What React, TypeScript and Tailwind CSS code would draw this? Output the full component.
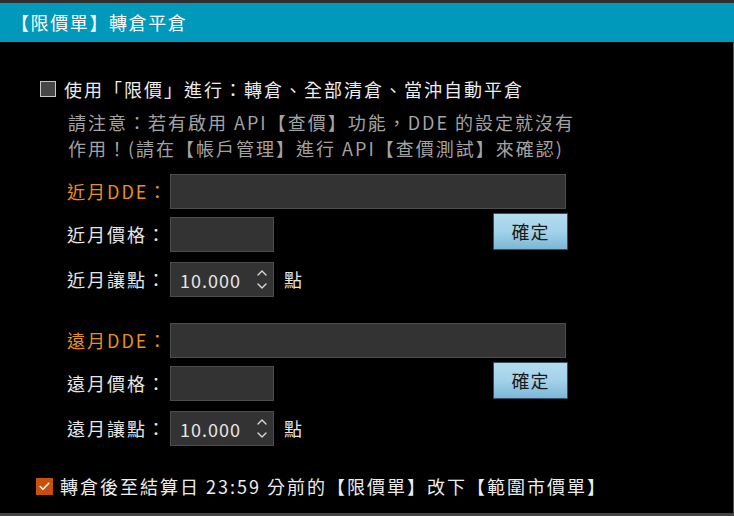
import { ChevronUp, ChevronDown, Check } from "lucide-react";

const font = { fontFamily: '"Noto Sans CJK TC", "Noto Sans", sans-serif' };

function TextBox({ w }: { w: string }) {
  return <div className={`${w} h-[35px] bg-[#333333] border border-[#4d4d4d]`} />;
}

function Spinner() {
  return (
    <div className="flex items-center">
      <div className="flex items-center justify-between w-[104px] h-[35px] bg-[#333333] border border-[#4d4d4d] pl-[9px] pr-[3px]">
        <span className="text-[18px] text-[#e6e6e6] leading-none tracking-[1px]">10.000</span>
        <div className="flex flex-col items-center text-[#d8d8d8]">
          <ChevronUp className="w-[16px] h-[16px] -mb-[3px]" strokeWidth={2} />
          <ChevronDown className="w-[16px] h-[16px]" strokeWidth={2} />
        </div>
      </div>
      <span className="ml-[10px] text-[18px] text-[#e6e6e6]">點</span>
    </div>
  );
}

function Group({ prefix }: { prefix: string }) {
  return (
    <div className="flex flex-col pl-[67px] tracking-[2px]">
      <div className="flex items-center">
        <span className="w-[103px] text-[18px] text-[#e8901a] whitespace-nowrap">{prefix}DDE：</span>
        <TextBox w="w-[396px]" />
      </div>
      <div className="flex items-center mt-[8px]">
        <span className="w-[103px] text-[18px] text-[#e6e6e6] whitespace-nowrap">{prefix}價格：</span>
        <TextBox w="w-[104px]" />
        <button className="ml-[219px] -mt-[6px] w-[75px] h-[37px] border border-[#2f4f66] bg-gradient-to-b from-[#b4dcef] via-[#a2d2ea] to-[#7bb7d6] text-[18px] text-[#1a1a1a] tracking-[1px]">
          確定
        </button>
      </div>
      <div className="flex items-center mt-[10px]">
        <span className="w-[103px] text-[18px] text-[#e6e6e6] whitespace-nowrap">{prefix}讓點：</span>
        <Spinner />
      </div>
    </div>
  );
}

export default function App() {
  return (
    <div className="w-[734px] h-[516px] bg-black flex flex-col overflow-hidden" style={font}>
      <div className="h-[3px] bg-[#2e2e2e]" />
      <div className="h-[39px] bg-[#0199bb] flex items-center pl-[11px]">
        <span className="text-[18px] text-white tracking-[1.6px]">【限價單】轉倉平倉</span>
      </div>
      <div className="flex-1 flex flex-col border-r border-[#555] border-b-[3px] border-b-[#444] tracking-[2px]">
        {/* limit price option */}
        <div className="flex items-center mt-[34px] pl-[40px] h-[26px]">
          <div className="w-[16px] h-[16px] bg-[#474747] border-[1.5px] border-[#c8c8c8]" />
          <span className="ml-[8px] text-[18px] text-[#ededed] leading-[26px] whitespace-nowrap">
            使用「限價」進行：轉倉、全部清倉、當沖自動平倉
          </span>
        </div>
        <div className="pl-[68px] mt-[7px] text-[18px] leading-[26px] text-[#a3a3a3] whitespace-nowrap">
          <div>請注意：若有啟用 API【查價】功能，DDE 的設定就沒有</div>
          <div>作用！(請在【帳戶管理】進行 API【查價測試】來確認)</div>
        </div>

        <div className="mt-[13px]">
          <Group prefix="近月" />
        </div>
        <div className="mt-[26px]">
          <Group prefix="遠月" />
        </div>

        {/* bottom option */}
        <div className="flex items-center mt-[27px] pl-[36px] h-[26px]">
          <div className="w-[17px] h-[17px] bg-[#c9500c] flex items-center justify-center">
            <Check className="w-[13px] h-[13px] text-white" strokeWidth={3} />
          </div>
          <span className="ml-[7px] text-[18px] text-[#ededed] leading-[26px] whitespace-nowrap">
            轉倉後至結算日 23:59 分前的【限價單】改下【範圍市價單】
          </span>
        </div>
      </div>
    </div>
  );
}
